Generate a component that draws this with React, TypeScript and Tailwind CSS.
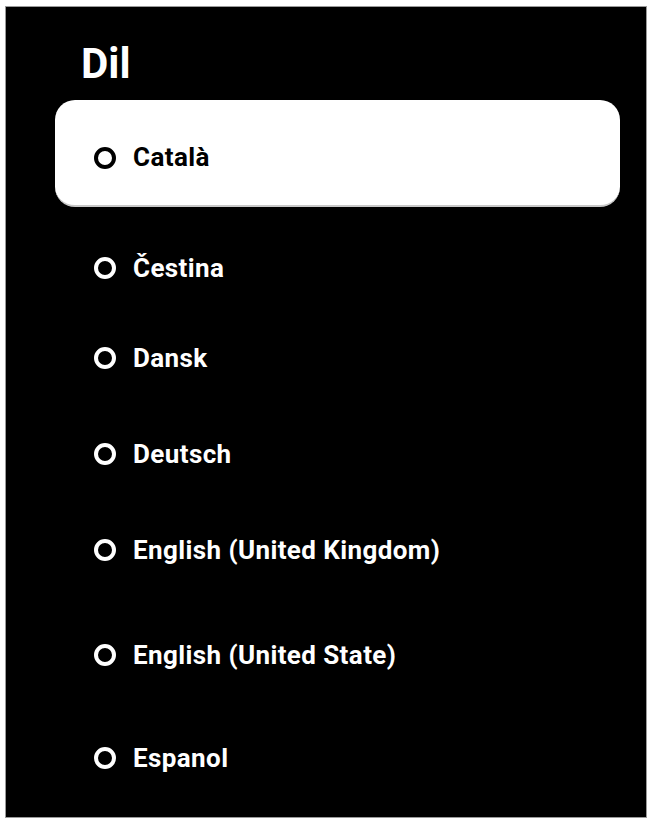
const languages = [
  { name: "Čestina", gap: "mt-[31px]" },
  { name: "Dansk", gap: "mt-[30px]" },
  { name: "Deutsch", gap: "mt-[36px]" },
  { name: "English (United Kingdom)", gap: "mt-[36px]" },
  { name: "English (United State)", gap: "mt-[45px]" },
  { name: "Espanol", gap: "mt-[43px]" },
]

function Radio({ dark }: { dark?: boolean }) {
  return (
    <span
      className={`block w-[22px] h-[22px] rounded-full border-4 shrink-0 ${
        dark ? "border-black" : "border-white"
      }`}
    />
  )
}

export default function App() {
  return (
    <div
      className="w-[650px] h-[821px] bg-white pt-[6px] pl-[5px]"
      style={{ fontFamily: "Roboto, 'Noto Sans', sans-serif" }}
    >
      <div className="w-[642px] h-[812px] bg-black border border-[#9a9a9a] pt-[36px] pl-[49px] pr-[26px]">
        <h1 className="ml-[26px] text-[42px] leading-[42px] font-bold text-white">Dil</h1>

        {/* selected item */}
        <div className="mt-[15px] h-[107px] bg-white rounded-[20px] border-b-2 border-[#c8c8c8] flex items-center pl-[39px] pt-[10px]">
          <Radio dark />
          <span className="ml-[17px] text-[26px] tracking-[0.4px] font-bold text-black">Català</span>
        </div>

        {languages.map((l) => (
          <div key={l.name} className={`${l.gap} h-[60px] flex items-center pl-[39px]`}>
            <Radio />
            <span className="ml-[17px] text-[26px] tracking-[0.4px] font-bold text-white">{l.name}</span>
          </div>
        ))}
      </div>
    </div>
  )
}
